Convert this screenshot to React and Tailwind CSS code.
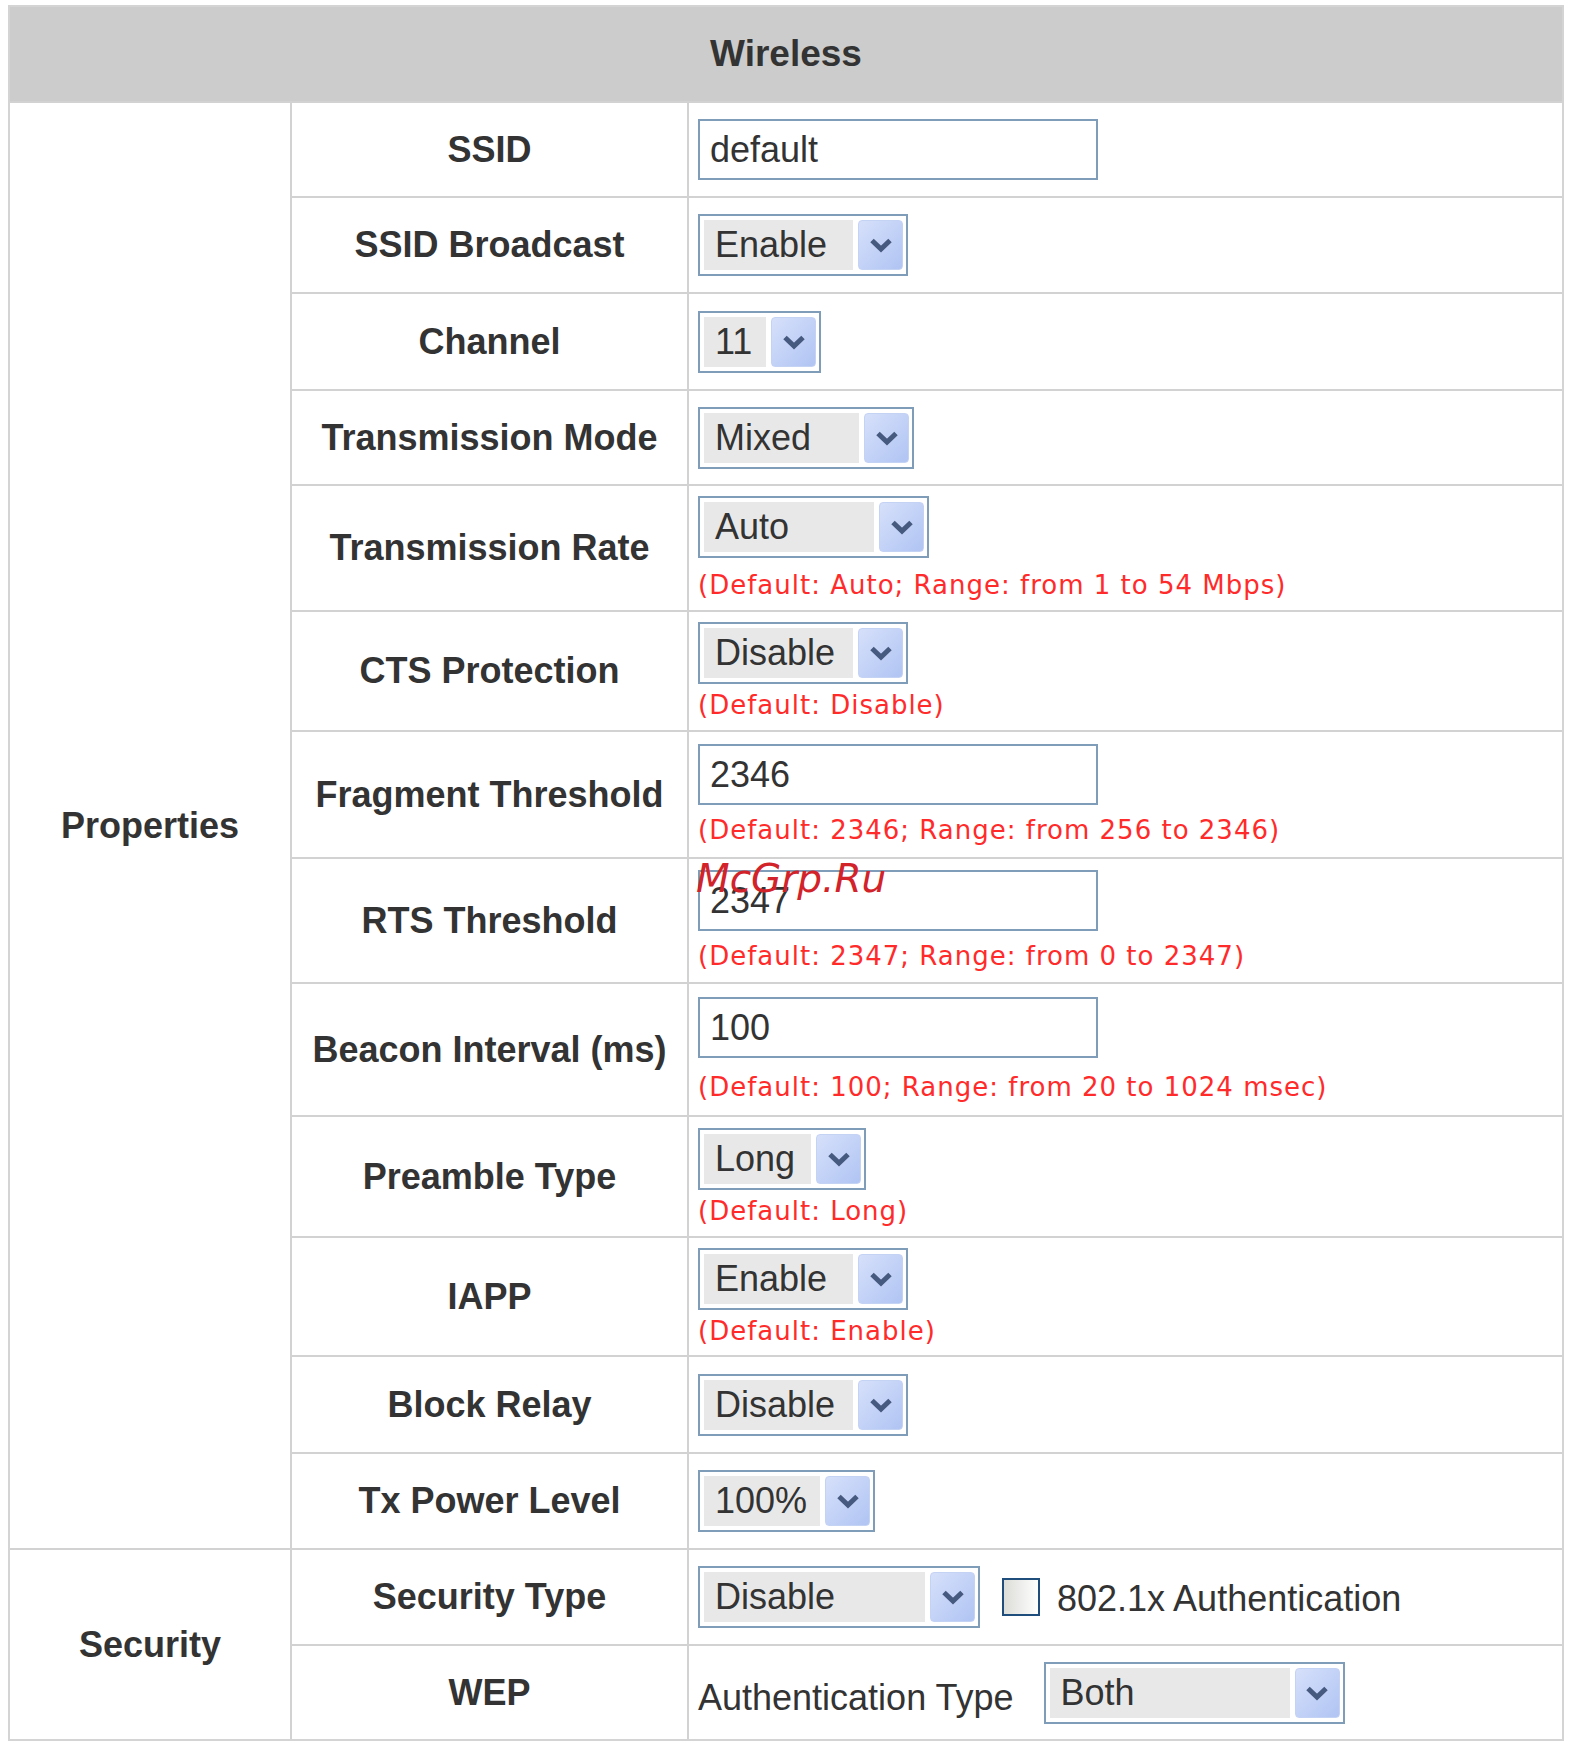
import React from "react";

// small down chevron used by the select boxes
function Chevron() {
  return (
    <svg width="26" height="16" viewBox="0 0 26 16">
      <path
        d="M4 3.5 L13 12 L22 3.5"
        fill="none"
        stroke="#46597f"
        strokeWidth="5"
        strokeLinejoin="miter"
      />
    </svg>
  );
}

function Select({ value, w }) {
  return (
    <div
      className={`flex h-[62px] ${w} border-2 border-[#7f9db9] bg-white py-[4px] pl-[4px] pr-[3px]`}
    >
      <div className="flex flex-1 items-center bg-[#e8e8e8] pl-[11px] text-[36px] text-[#333]">
        {value}
      </div>
      <div className="ml-[5px] flex w-[45px] items-center justify-center rounded-[4px] border border-[#c4d2f4] bg-gradient-to-br from-[#d6e0fa] to-[#b0c4f3]">
        <Chevron />
      </div>
    </div>
  );
}

function TextInput({ value }) {
  return (
    <div className="flex h-[61px] w-[400px] items-center border-2 border-[#7f9db9] bg-white pl-[10px] text-[36px] text-[#333]">
      {value}
    </div>
  );
}

function Note({ children }) {
  return (
    <div className="font-['DejaVu_Sans',sans-serif] text-[26px] leading-[30px] tracking-[1px] text-[#ff2b2b]">
      {children}
    </div>
  );
}

const props = [
  { label: "SSID", field: <TextInput value="default" /> },
  { label: "SSID Broadcast", field: <Select value="Enable" w="w-[210px]" /> },
  { label: "Channel", field: <Select value="11" w="w-[123px]" /> },
  { label: "Transmission Mode", field: <Select value="Mixed" w="w-[216px]" /> },
  {
    label: "Transmission Rate",
    field: <Select value="Auto" w="w-[231px]" />,
    note: "(Default: Auto; Range: from 1 to 54 Mbps)",
    gap: "gap-[12px]",
  },
  {
    label: "CTS Protection",
    field: <Select value="Disable" w="w-[210px]" />,
    note: "(Default: Disable)",
    gap: "gap-[6px]",
  },
  {
    label: "Fragment Threshold",
    field: <TextInput value="2346" />,
    note: "(Default: 2346; Range: from 256 to 2346)",
    gap: "gap-[10px]",
  },
  {
    label: "RTS Threshold",
    field: <TextInput value="2347" />,
    note: "(Default: 2347; Range: from 0 to 2347)",
    gap: "gap-[10px]",
    mark: true,
  },
  {
    label: "Beacon Interval (ms)",
    field: <TextInput value="100" />,
    note: "(Default: 100; Range: from 20 to 1024 msec)",
    gap: "gap-[14px]",
  },
  {
    label: "Preamble Type",
    field: <Select value="Long" w="w-[168px]" />,
    note: "(Default: Long)",
    gap: "gap-[6px]",
  },
  {
    label: "IAPP",
    field: <Select value="Enable" w="w-[210px]" />,
    note: "(Default: Enable)",
    gap: "gap-[6px]",
  },
  { label: "Block Relay", field: <Select value="Disable" w="w-[210px]" /> },
  { label: "Tx Power Level", field: <Select value="100%" w="w-[177px]" /> },
];

function Label({ children }) {
  return (
    <div className="flex items-center justify-center bg-white text-[36px] font-bold text-[#333]">
      {children}
    </div>
  );
}

function Row({ row }) {
  return (
    <>
      <Label>{row.label}</Label>
      <div
        className={`relative flex flex-col items-start justify-center bg-white pl-[9px] ${row.gap || ""}`}
      >
        {row.field}
        {row.note && <Note>{row.note}</Note>}
        {row.mark && (
          <div className="absolute left-[7px] top-0 font-['DejaVu_Sans',sans-serif] text-[39px] italic leading-none text-[#d3232a]">
            McGrp.Ru
          </div>
        )}
      </div>
    </>
  );
}

export default function App() {
  return (
    <div className="min-h-screen bg-white pl-[8px] pt-[5px] font-['Liberation_Sans',Arial,sans-serif]">
      <div className="w-[1556px] border-2 border-[#d4d4d4]">
        <div className="grid grid-cols-[280px_395px_1fr] grid-rows-[94px_93px_94px_95px_93px_124px_118px_125px_123px_131px_119px_117px_95px_94px_94px_93px] gap-[2px] bg-[#d2d2d2]">
          {/* header */}
          <div className="col-span-3 flex items-center justify-center bg-[#cccccc] text-[37px] font-bold text-[#333]">
            Wireless
          </div>

          {/* properties block */}
          <div className="row-span-13 flex items-center justify-center bg-white text-[36px] font-bold text-[#333]">
            Properties
          </div>
          {props.map((r) => (
            <Row key={r.label} row={r} />
          ))}

          {/* security block */}
          <div className="row-span-2 flex items-center justify-center bg-white text-[36px] font-bold text-[#333]">
            Security
          </div>
          <Label>Security Type</Label>
          <div className="flex items-center bg-white pl-[9px]">
            <Select value="Disable" w="w-[282px]" />
            <div className="ml-[22px] h-[38px] w-[38px] border-2 border-[#1f4e7d] bg-gradient-to-r from-[#dcdcd8] to-white" />
            <span className="ml-[17px] pt-[4px] text-[36px] text-[#333]">
              802.1x Authentication
            </span>
          </div>

          <Label>WEP</Label>
          <div className="flex items-center bg-white pl-[9px]">
            <span className="pt-[10px] text-[36px] text-[#333]">
              Authentication Type
            </span>
            <div className="ml-[30px]">
              <Select value="Both" w="w-[301px]" />
            </div>
          </div>
        </div>
      </div>
    </div>
  );
}
